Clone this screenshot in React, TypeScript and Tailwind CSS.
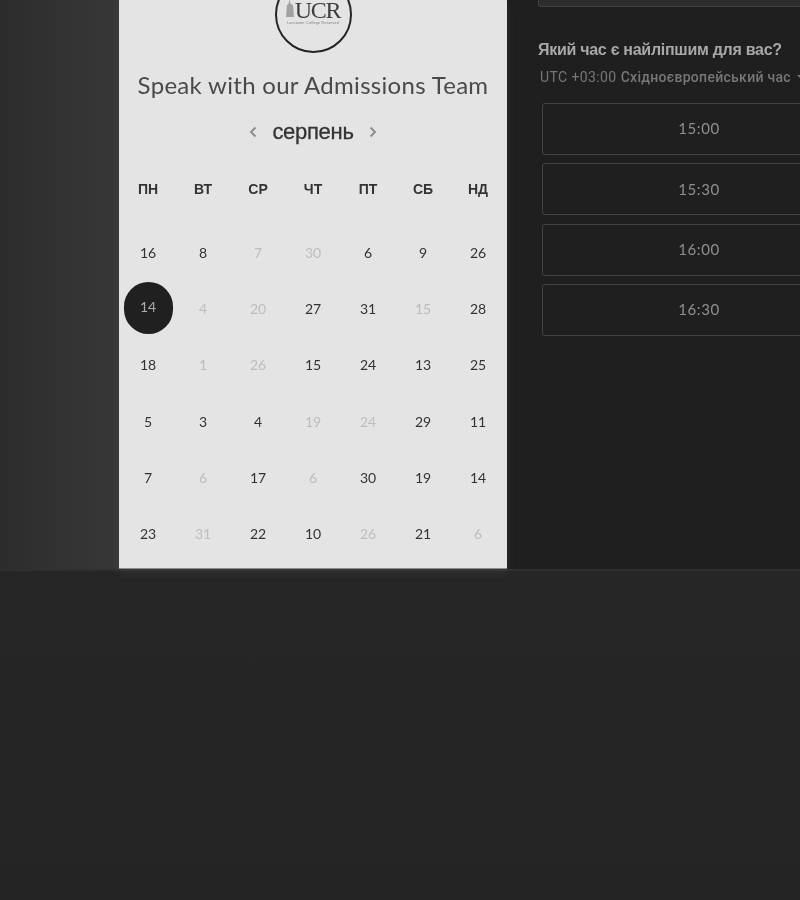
const days = ["ПН", "ВТ", "СР", "ЧТ", "ПТ", "СБ", "НД"];
type Cell = [string, "on" | "off" | "sel"];
const rows: Cell[][] = [
  [["16", "on"], ["8", "on"], ["7", "off"], ["30", "off"], ["6", "on"], ["9", "on"], ["26", "on"]],
  [["14", "sel"], ["4", "off"], ["20", "off"], ["27", "on"], ["31", "on"], ["15", "off"], ["28", "on"]],
  [["18", "on"], ["1", "off"], ["26", "off"], ["15", "on"], ["24", "on"], ["13", "on"], ["25", "on"]],
  [["5", "on"], ["3", "on"], ["4", "on"], ["19", "off"], ["24", "off"], ["29", "on"], ["11", "on"]],
  [["7", "on"], ["6", "off"], ["17", "on"], ["6", "off"], ["30", "on"], ["19", "on"], ["14", "on"]],
  [["23", "on"], ["31", "off"], ["22", "on"], ["10", "on"], ["26", "off"], ["21", "on"], ["6", "off"]],
];
const times = ["15:00", "15:30", "16:00", "16:30"];

export default function App() {
  return (
    <div className="flex h-[900px] w-[800px] flex-col overflow-hidden bg-[#242424] font-['Liberation_Sans',sans-serif] blur-[0.4px]">
      <div className="flex h-[569px] shrink-0">
        <div className="w-[119px] shrink-0 bg-gradient-to-r from-[#2c2c2c] to-[#383838]" />
        <div className="relative z-10 flex w-[388px] shrink-0 flex-col items-center overflow-hidden border-b border-[#8a8a8a] bg-[#e4e4e4] shadow-[0_4px_8px_rgba(90,90,90,0.25)]">
          <div className="mt-[-24px] flex h-[77px] w-[77px] shrink-0 flex-col items-center justify-end rounded-full border-[2.5px] border-[#242424] pb-[26px]">
            <div className="flex items-end gap-[1px] leading-none">
              <svg width="8" height="20" viewBox="0 0 9 20" className="mb-[1px]">
                <path d="M4 0 L5 5 L8 7 L9 20 L0 20 L1 7 L3 5 Z" fill="#a3a3a3" />
              </svg>
              <span className="font-['Liberation_Serif',serif] text-[24px] leading-[18px] tracking-[-1.2px] text-[#3d3d3d]">UCR</span>
            </div>
            <span className="mt-[2px] text-[3.5px] leading-[4px] tracking-[0.3px] whitespace-nowrap text-[#777]">Lancaster College Reserved</span>
          </div>
          <h1 className="mt-[17px] font-['Lato',sans-serif] text-[24px] leading-[30px] font-normal tracking-[0.3px] whitespace-nowrap text-[#4a4a4a]">Speak with our Admissions Team</h1>
          <div className="mt-[17px] flex h-[30px] items-center">
            <svg width="12" height="14" viewBox="0 0 12 14" fill="none" stroke="#8d8d8d" strokeWidth="2"><path d="M8.5 2.5 L4 7 L8.5 11.5" /></svg>
            <span className="mx-[13px] text-[22px] leading-[30px] tracking-[-0.3px] text-[#333] [-webkit-text-stroke:0.3px_#333]">серпень</span>
            <svg width="12" height="14" viewBox="0 0 12 14" fill="none" stroke="#8d8d8d" strokeWidth="2"><path d="M3.5 2.5 L8 7 L3.5 11.5" /></svg>
          </div>
          <div className="mt-[33px] grid w-[385px] grid-cols-7 text-center text-[14px] leading-[18px] font-bold text-[#333]">
            {days.map((d) => (
              <div key={d}>{d}</div>
            ))}
          </div>
          <div className="mt-[27px] flex w-[385px] flex-col font-['Lato',sans-serif] text-[14px] leading-[56.2px]">
            {rows.map((row, i) => (
              <div key={i} className="grid h-[56.2px] grid-cols-7 text-center">
                {row.map(([n, kind], j) =>
                  kind === "sel" ? (
                    <div key={j} className="flex items-center justify-center">
                      <span className="mb-[2px] flex h-[52px] w-[49px] items-center justify-center rounded-full bg-[#202020] pb-[3px] text-[14px] leading-none text-[#aaa]">{n}</span>
                    </div>
                  ) : (
                    <div key={j} className={kind === "on" ? "text-[#333]" : "text-[#bdbdbd]"}>{n}</div>
                  )
                )}
              </div>
            ))}
          </div>
        </div>
        <div className="min-w-0 flex-1 overflow-hidden bg-[#1f1f1f] pl-[31px]">
          <div className="mt-[-10px] h-[17px] w-[300px] rounded-[3px] border border-[#444] bg-[#2c2c2c]" />
          <div className="mt-[33px] w-[300px] text-[16px] leading-[20px] font-bold tracking-[-0.28px] whitespace-nowrap text-[#a8a8a8]">Який час є найліпшим для вас?</div>
          <div className="mt-[7px] ml-[2px] flex w-[300px] items-center text-[14px] leading-[20px] whitespace-nowrap text-[#777]">
            <span className="font-['Roboto',sans-serif] tracking-[0.4px]">UTC +03:00</span>
            <span className="ml-[4px] font-['Roboto',sans-serif] font-medium tracking-[0.3px]">Східноєвропейський час</span>
            <span className="ml-[6px] h-0 w-0 border-x-[4px] border-t-[4px] border-x-transparent border-t-[#777]" />
          </div>
          <div className="mt-[16px] ml-[4px] flex w-[314px] flex-col gap-[8.33px]">
            {times.map((t) => (
              <div key={t} className="flex h-[52px] items-center justify-center rounded-[3px] border border-[#444] pb-[1px] font-['Lato',sans-serif] text-[15px] tracking-[0.6px] text-[#8f8f8f]">{t}</div>
            ))}
          </div>
        </div>
      </div>
      <div className="flex-1 border-t-2 border-[#2f2f2f] bg-gradient-to-b from-[#262626] to-[#242424]" />
    </div>
  );
}
